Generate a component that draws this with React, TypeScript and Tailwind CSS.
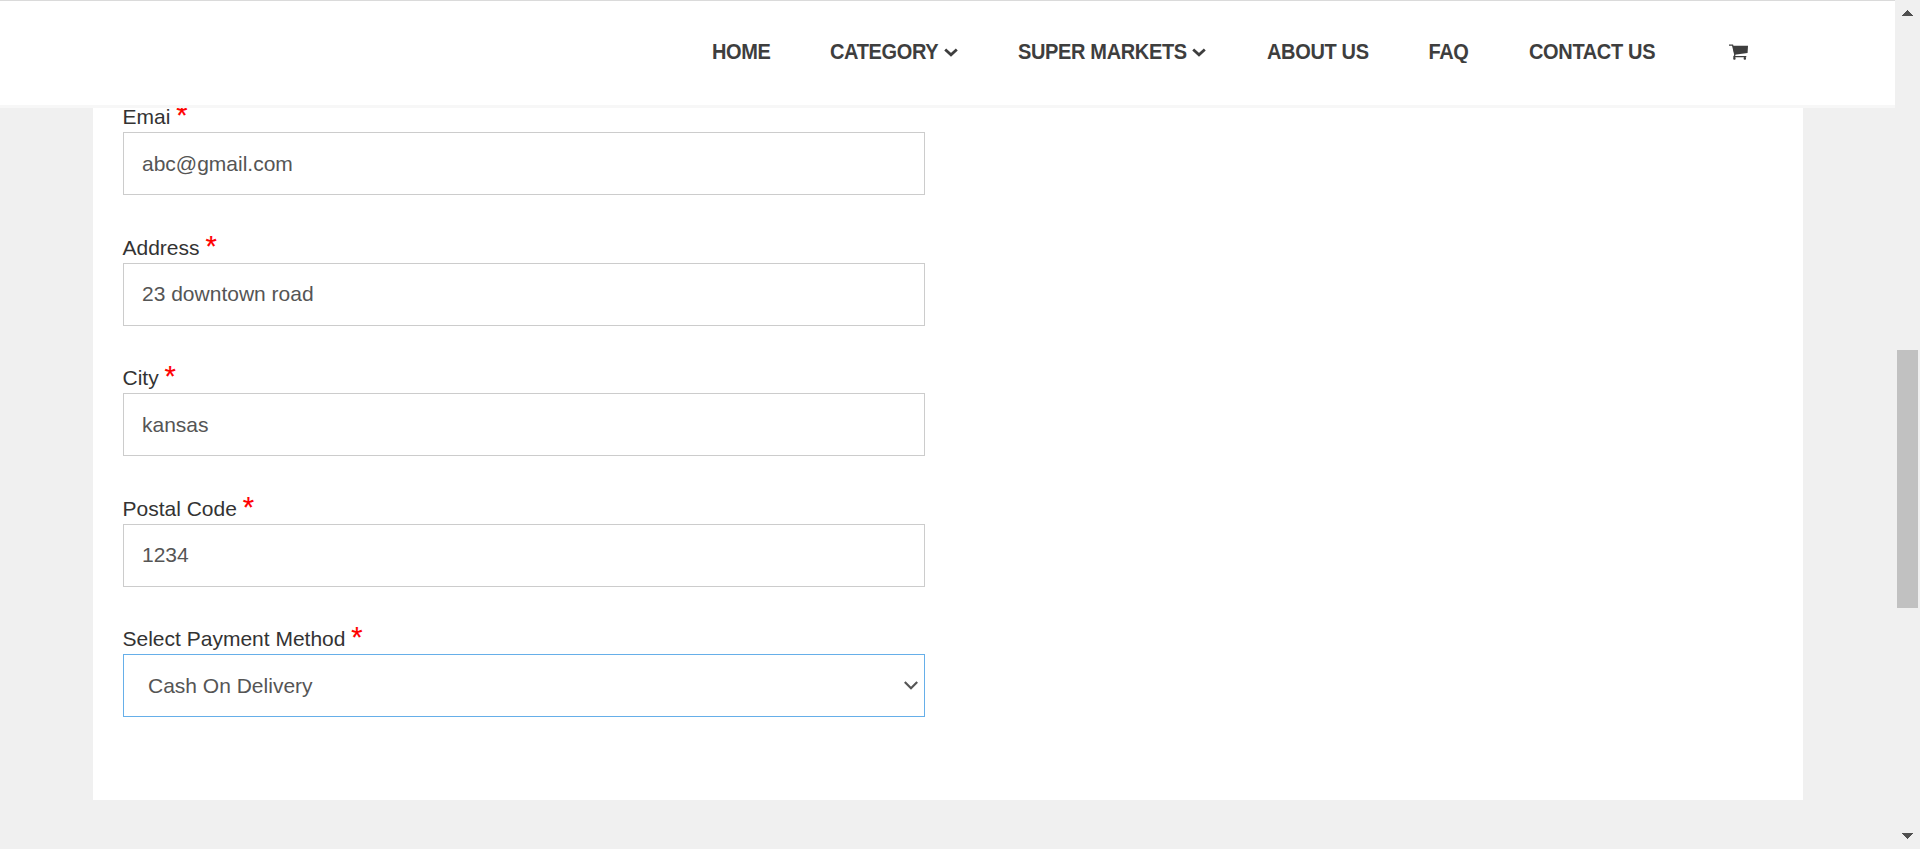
const nav = [
  { label: "HOME", box: "ml-[712px] w-[57px]" },
  { label: "CATEGORY", box: "ml-[61px] w-[128px]", menu: true },
  { label: "SUPER MARKETS", box: "ml-[60px] w-[188px]", menu: true },
  { label: "ABOUT US", box: "ml-[61px] w-[101px]" },
  { label: "FAQ", box: "ml-[60.5px] w-[41px]" },
  { label: "CONTACT US", box: "ml-[59.5px] w-[127px]" },
];

const fields = [
  { label: "Emai", value: "abc@gmail.com", gap: "mb-[68px]", pad: "pb-0" },
  { label: "Address", value: "23 downtown road", gap: "mb-[67px]", pad: "pb-[2px]" },
  { label: "City", value: "kansas", gap: "mb-[68px]", pad: "pb-0" },
  { label: "Postal Code", value: "1234", gap: "mb-[67px]", pad: "pb-[2px]" },
];

function Label({ text }: { text: string }) {
  return (
    <div className="-mt-[33px] -ml-[0.5px] flex h-[33px] items-baseline whitespace-pre text-[21px] leading-[30px] text-[#333]">
      {text + " "}
      <span className="translate-y-px text-[29px] leading-[30px] text-[#f00] [-webkit-text-stroke:0.2px_#f00]">*</span>
    </div>
  );
}

function Cart() {
  return (
    <svg className="-mt-[2px] ml-[72.5px] h-[16px] w-[19px] shrink-0" viewBox="0 0 18 16" preserveAspectRatio="none" fill="#3e3e3e">
      <path d="M3.4 1.8H18L17.6 9 5.2 10.7z" />
      <path d="M0 1.2H3.4L5.6 11 4.7 12.6H16.4" fill="none" stroke="#3e3e3e" strokeWidth="1.2" />
      <rect x="4" y="13" width="2.2" height="2.7" rx="0.8" />
      <rect x="13.9" y="13" width="2.2" height="2.7" rx="0.8" />
    </svg>
  );
}

export default function App() {
  return (
    <div className="flex h-[849px] w-[1920px] overflow-hidden bg-[#f0f0f0] font-['Liberation_Sans',Arial,sans-serif]">
      <div className="flex w-[1895px] flex-col">
        <header className="z-10 flex h-[108px] shrink-0 items-center border-t border-b-[3px] border-t-[#dadada] border-b-[#f7f7f7] bg-white">
          {nav.map((n) => (
            <a key={n.label} className={`${n.box} mt-[-3px] flex shrink-0 items-center justify-between whitespace-nowrap text-[20px] leading-[30px] font-bold tracking-[-0.35px] text-[#3e3e3e]`}>
              <span className="-mt-[2px] scale-y-[1.08]">{n.label}</span>
              {n.menu && (
                <svg className="mt-[2px] h-[9px] w-[14px] shrink-0" viewBox="0 0 14 9" fill="none" stroke="#3e3e3e" strokeWidth="2.8">
                  <path d="M1.2 1.5 7 6.8 12.8 1.5" />
                </svg>
              )}
            </a>
          ))}
          <Cart />
        </header>
        <main className="ml-[93px] flex h-[692px] w-[1710px] flex-col bg-white pt-[24px] pl-[30px]">
          {fields.map((f) => (
            <div key={f.label} className={f.gap}>
              <Label text={f.label} />
              <input readOnly defaultValue={f.value} className={`${f.pad} block h-[63px] w-[802px] border border-[#ccc] bg-white px-[18px] text-[21px] text-[#555] outline-none`} />
            </div>
          ))}
          <Label text="Select Payment Method" />
          <div className="flex h-[63px] w-[802px] items-center justify-between border border-[#66afe9] pr-[6px] pl-[24px] text-[21px] text-[#555]">
            <span>Cash On Delivery</span>
            <svg className="-mt-px h-[9px] w-[14px]" viewBox="0 0 14 9" fill="none" stroke="#555" strokeWidth="2.2">
              <path d="M.8 1 7 7.2 13.2 1" />
            </svg>
          </div>
        </main>
      </div>
      <div className="flex w-[25px] flex-col items-center bg-[#f0f0f0] pt-[10px]">
        <svg className="h-[6px] w-[11px]" viewBox="0 0 11 6" fill="#505050" shapeRendering="crispEdges"><path d="M0 6 5.5 0 11 6z" /></svg>
        <div className="mt-[334px] h-[258px] w-[21px] bg-[#c1c1c1]" />
        <svg className="mt-[225px] h-[6px] w-[11px]" viewBox="0 0 11 6" fill="#505050" shapeRendering="crispEdges"><path d="M0 0 5.5 6 11 0z" /></svg>
      </div>
    </div>
  );
}
